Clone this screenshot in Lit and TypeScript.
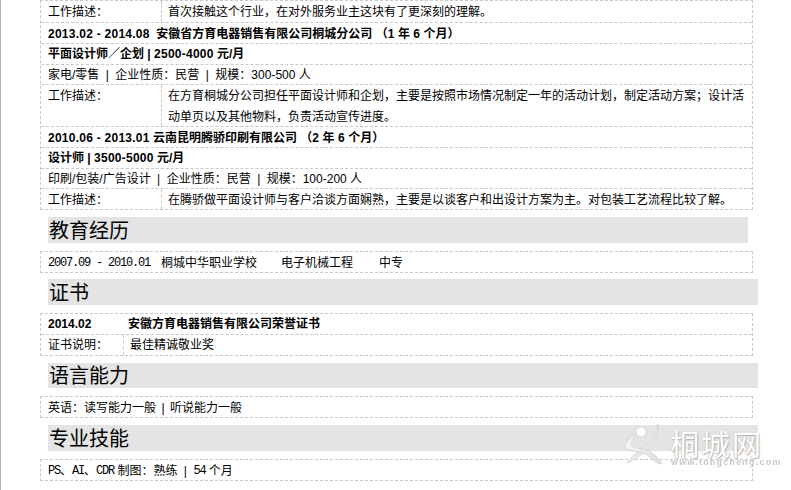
import { LitElement, html, css } from "lit";
import { customElement } from "lit/decorators.js";

@customElement("app-root")
export class AppRoot extends LitElement {
  static styles = css`
    :host {
      display: block;
      position: relative;
      width: 791px;
      height: 490px;
      overflow: hidden;
      background: #fff;
      color: #000;
      font: 12px/20px "Liberation Sans", "Noto Sans CJK SC", sans-serif;
    }
    .page {
      box-sizing: border-box;
      height: 490px;
      border-left: 1px solid #aeb2bf;
      padding-left: 39px;
      width: 791px;
    }
    .box {
      width: 713px;
      box-sizing: border-box;
      border: 1px dashed #c8c8c8;
    }
    .row {
      display: flex;
      box-sizing: border-box;
      height: 21px;
      border-top: 1px dashed #c8c8c8;
      padding-left: 7px;
      align-items: center;
      white-space: pre;
    }
    .row.h20 { height: 20px; }
    .row.first { border-top: 0; height: 21px; }
    .row.single { border-top: 0; height: 20px; }
    .row.split { padding-left: 0; align-items: stretch; }
    .row.tall { height: 42px; }
    .label {
      box-sizing: border-box;
      width: 121px;
      padding: 1px 0 0 7px;
      line-height: 21px;
      border-right: 1px dashed #c8c8c8;
      flex: none;
    }
    .value {
      box-sizing: border-box;
      padding: 1px 0 0 6px;
      flex: 1;
      white-space: normal;
      line-height: 21px;
    }
    .b { font-weight: 700; }
    .pad { padding-top: 1px; }
    .cert .label { width: 83px; padding-top: 0; }
    .cert .value { padding-top: 0; }
    .certdate { width: 80px; }
    h2 {
      margin: 0;
      box-sizing: border-box;
      margin-left: 8px;
      width: 710px;
      height: 26px;
      background: #e4e4e4;
      font: 400 20px/26px "Noto Sans CJK SC", sans-serif;
      padding-left: 1px;
    }
    h2.short { width: 700px; }
    h2.h25 { height: 25px; line-height: 24px; }
    .mt6 { margin-top: 6px; }
    .mt7 { margin-top: 7px; }
    .mt8 { margin-top: 8px; }
    .mono {
      font-family: "Liberation Mono", "Noto Sans CJK SC", monospace;
      letter-spacing: -1.2px;
    }
    .edu .school { margin-left: 11px; }
    .edu .major { margin-left: 24px; }
    .edu .level { margin-left: 26px; }
    .num { letter-spacing: 0.25px; }
    .sep {
      display: inline-block;
      width: 16px;
      text-align: center;
    }
    .sep.narrow { width: 14px; }
    .wm {
      position: absolute;
      left: 624px;
      top: 420px;
      width: 145px;
      height: 50px;
      pointer-events: none;
    }
    .wm svg { position: absolute; left: 0; top: 2px; filter: blur(0.4px); }
    .wm .cn {
      position: absolute;
      left: 46px;
      top: 8px;
      font: 400 29px/30px "Noto Sans CJK SC", sans-serif;
      letter-spacing: 2px;
      color: #fff;
      text-shadow: 1px 1px 1px #b4b4b4, -1px 0 0 #d0d0d0;
      white-space: nowrap;
    }
    .wm .en {
      position: absolute;
      left: 47px;
      top: 37px;
      font: 700 9px/10px "Liberation Sans", sans-serif;
      letter-spacing: 1.2px;
      color: #c8c8c8;
      filter: blur(0.5px);
      white-space: nowrap;
    }
  `;

  render() {
    return html`
      <div class="page">
        <div class="box">
          <div class="row first split">
            <div class="label">工作描述：</div>
            <div class="value">首次接触这个行业，在对外服务业主这块有了更深刻的理解。</div>
          </div>
          <div class="row b pad"><span class="num">2013.02 - 2014.08</span>  安徽省方育电器销售有限公司桐城分公司 （<span class="num">1</span> 年 <span class="num">6</span> 个月）</div>
          <div class="row b">平面设计师／企划 | <span class="num">2500-4000</span> 元/月</div>
          <div class="row h20">家电/零售<span class="sep">|</span>企业性质：民营<span class="sep">|</span>规模：300-500 人</div>
          <div class="row split tall">
            <div class="label">工作描述：</div>
            <div class="value">在方育桐城分公司担任平面设计师和企划，主要是按照市场情况制定一年的活动计划，制定活动方案；设计活动单页以及其他物料，负责活动宣传进度。</div>
          </div>
          <div class="row b pad"><span class="num">2010.06 - 2013.01</span> 云南昆明腾骄印刷有限公司 （<span class="num">2</span> 年 <span class="num">6</span> 个月）</div>
          <div class="row b">设计师 | <span class="num">3500-5000</span> 元/月</div>
          <div class="row h20">印刷/包装/广告设计<span class="sep">|</span>企业性质：民营<span class="sep">|</span>规模：100-200 人</div>
          <div class="row split">
            <div class="label">工作描述：</div>
            <div class="value">在腾骄做平面设计师与客户洽谈方面娴熟，主要是以谈客户和出设计方案为主。对包装工艺流程比较了解。</div>
          </div>
        </div>

        <h2 class="short mt7">教育经历</h2>
        <div class="box mt8">
          <div class="row single edu pad">
            <span class="mono">2007.09 - 2010.01</span><span class="school">桐城中华职业学校</span><span class="major">电子机械工程</span><span class="level">中专</span>
          </div>
        </div>

        <h2 class="mt6">证书</h2>
        <div class="box mt8 cert">
          <div class="row single b"><span class="certdate">2014.02</span>安徽方育电器销售有限公司荣誉证书</div>
          <div class="row split">
            <div class="label">证书说明：</div>
            <div class="value">最佳精诚敬业奖</div>
          </div>
        </div>

        <h2 class="mt7 h25">语言能力</h2>
        <div class="box mt8">
          <div class="row single pad">英语：读写能力一般<span class="sep narrow">|</span>听说能力一般</div>
        </div>

        <h2 class="mt7">专业技能</h2>
        <div class="box mt8">
          <div class="row single pad"><span class="mono">PS</span>、<span class="mono">AI</span>、<span class="mono">CDR</span> 制图：熟练<span class="sep">|</span><span class="mono">54</span> 个月</div>
        </div>
      </div>

      <div class="wm">
        <svg width="44" height="46" viewBox="0 0 44 46" fill="none">
          <defs>
            <linearGradient id="g" x1="0" y1="0" x2="1" y2="1">
              <stop offset="0" stop-color="#fbfbfb" />
              <stop offset="1" stop-color="#dcdcdc" />
            </linearGradient>
          </defs>
          <circle cx="17" cy="10" r="5" fill="#fff" stroke="#d6d6d6" />
          <path d="M34 2 C32 12 27 20 20 25 C13 30 7 35 3 41 C11 38 17 33 23 28 C30 21 35 12 34 2 Z" fill="url(#g)" stroke="#d2d2d2" stroke-width="0.8" />
          <path d="M1 25 C2 20 6 15 13 12 C8 17 6 21 8 24 C13 27 21 26 27 30 C32 34 36 38 38 42 C33 42 28 37 23 33 C16 28 6 31 1 25 Z" fill="url(#g)" stroke="#d2d2d2" stroke-width="0.8" />
        </svg>
        <div class="cn">桐城网</div>
        <div class="en">www.tongcheng.com</div>
      </div>
    `;
  }
}
